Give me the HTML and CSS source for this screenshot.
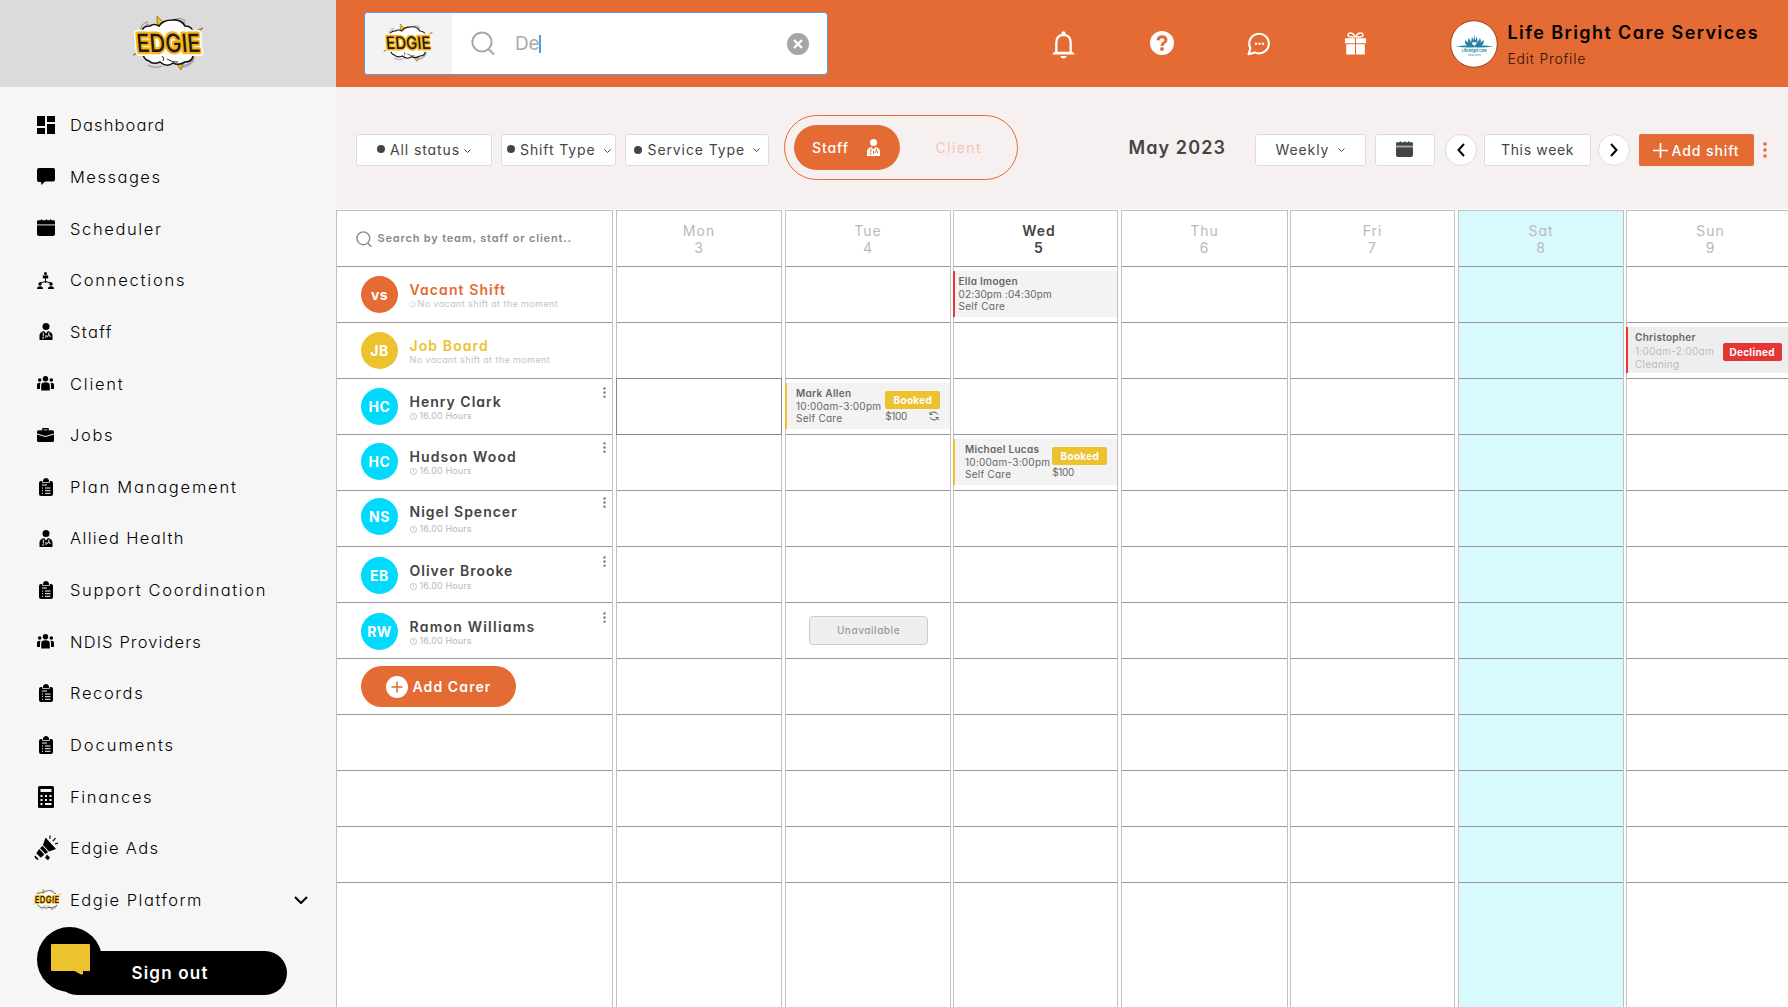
FILE: index.html
```html
<!DOCTYPE html>
<html lang="en">
<head>
<meta charset="utf-8">
<title>Edgie – Scheduler</title>
<link rel="stylesheet" href="styles.css">
</head>
<body>
<svg class="defs" aria-hidden="true">
  <symbol id="logo" viewBox="0 0 72 56">
    <g fill="none" stroke="#8d8d8d" stroke-width="1"><path d="M9 14q-1-6 7-8M12 13q0-4 5-5M43 3q6-2 11 2M45 5q5-1 8 2M50 49q8 1 13-8M48 51q9 1 14-7M16 49q6 4 14 1"/></g>
    <path d="M25 0l7 7-1 6-6-2zM71 12l-8 8-4-4zM1 39l12-8 3 5zM49 54l-5-7 2-5 6 2z" fill="#e9c01a" stroke="#4a3c05" stroke-width=".5"/>
    <path d="M10 16q0-6 8-6 4-3 9 0 4-6 13-6 9-1 13 6 8 0 9 9l-1 21q-1 6-8 6-6 4-12 1-6 5-13-1-7 3-11-1-6-2-6-8z" fill="#fff" stroke="#111" stroke-width="1.6"/>
    <path d="M30 40q3 2 1 5M35 43q6 4 11 3" fill="none" stroke="#222" stroke-width="1"/>
    <g font-family="Inter, sans-serif" font-weight="500" font-size="25" text-anchor="middle" transform="translate(-3 0) skewX(5)">
      <text x="37" y="36.500" textLength="64" lengthAdjust="spacingAndGlyphs" fill="#fff" stroke="#fff" stroke-width="8" stroke-linejoin="round">EDGIE</text>
      <text x="37" y="36.500" textLength="64" lengthAdjust="spacingAndGlyphs" fill="#f9b414" stroke="#f9b414" stroke-width="4.500" stroke-linejoin="round">EDGIE</text>
      <text x="37" y="36.500" textLength="64" lengthAdjust="spacingAndGlyphs" fill="#1b1b1b">EDGIE</text>
    </g>
  </symbol>
  <symbol id="dashboard" viewBox="0 0 18 18"><path d="M0 0h8v10H0zM10 0h8v6h-8zM0 12h8v6H0zM10 8h8v10h-8z"/></symbol>
  <symbol id="message" viewBox="0 0 18 17"><path d="M2 0h14.500q1.500 0 1.500 2v9.500q0 2-2 2H8L4.500 17l-.5-3H2q-2 0-2-2V2q0-2 2-2z"/></symbol>
  <symbol id="calendar" viewBox="0 0 18 17"><path d="M0 5V2.500Q0 1.200 1.500 1.200h2L4.500 0l1 1.200h3L9.500 0l1 1.200h2L13.500 0l1 1.200h2q1.500 0 1.500 1.300V5z"/><path d="M0 5h18v1.600H0z" opacity=".45"/><path d="M0 6.600h18V15q0 2-2 2H2q-2 0-2-2z"/></symbol>
  <symbol id="network" viewBox="0 0 17 17"><circle cx="8.500" cy="1.500" r="1.500"/><path d="M5.800 3.400h5.400v3H5.800z"/><path d="M8.500 6v5M3 12.500V11l5.500-1.500L14 11v1.500" fill="none" stroke="currentColor"/><circle cx="3" cy="12" r="1.700"/><circle cx="14" cy="12" r="1.700"/><path d="M0 17q0-2.800 3-2.800T6 17zM11 17q0-2.800 3-2.800t3 2.800z"/></symbol>
  <symbol id="person" viewBox="0 0 14 17"><circle cx="7" cy="3.500" r="3.500"/><path d="M.5 17v-4.500q0-3.500 4.500-4.500l2 2.500L9 8q4.500 1 4.500 4.500V17z"/><path d="M4.300 9.500v4M3 15h2M9.800 9.500v2.300M8.600 14q0-2 1.300-2t1.300 2M7 12v3" class="cut"/></symbol>
  <symbol id="people" viewBox="0 0 17 15"><circle cx="8.500" cy="2.700" r="2.700"/><circle cx="2.700" cy="4" r="1.800"/><circle cx="14.300" cy="4" r="1.800"/><path d="M4.200 14.500V9.500q0-3.200 4.300-3.200t4.300 3.200v5zM0 13V9q0-2.400 3.500-2.200Q3 8 3 9.500V13zM17 13V9q0-2.400-3.500-2.200Q14 8 14 9.500V13z"/></symbol>
  <symbol id="case" viewBox="0 0 17 14"><path d="M6 2.500V.8h5v1.700" fill="none" stroke="currentColor" stroke-width="1.500"/><path d="M1.500 2.300h14q1.500 0 1.500 1.500v1.700L8.500 8 0 5.500V3.800q0-1.500 1.500-1.500zM0 6.600L8.500 9 17 6.600v5.900q0 1.500-1.500 1.500h-14Q0 14 0 12.500z"/></symbol>
  <symbol id="clipboard" viewBox="0 0 14 18"><path d="M4 2.800Q4.500 0 7 0t3 2.800V4H4zM0 5q0-2 2-2h1.200v1.800h7.600V3H12q2 0 2 2v11q0 2-2 2H2q-2 0-2-2z"/><path d="M3 7h5M6 10h5.500M6 12.700h5.500M6 15.300h5.500M3 10h1M3 12.700h1M3 15.300h1" class="cut"/></symbol>
  <symbol id="calc" viewBox="0 0 16 22"><path d="M1.500 0h13Q16 0 16 1.500v19q0 1.500-1.500 1.500h-13Q0 22 0 20.500v-19Q0 0 1.500 0z"/><path d="M2.500 3h11v3h-11zM2.500 9h2v2h-2zM7 9h2v2H7zM11.500 9h2v2h-2zM2.500 13h2v2h-2zM7 13h2v2H7zM11.500 13h2v2h-2zM2.500 17h2v2h-2zM7 17h6.500v2H7z" fill="#f6f6f6"/></symbol>
  <symbol id="ads" viewBox="0 0 24 26"><path d="M11.500 2.500L22 14l-7 2.500-6-6.500zM8.500 10.800l5.600 6.200-2.600 2-5.500-5.700zM5.200 14l5.200 5.500-3.600 3.300-4.500-4.600zM13 19.500l3 3-2 2.700-3-2.500zM1.300 20.500l3.400 3.800-.7.600q-3.300-1-3.500-3.600z"/><path d="M16 .5v3.200M21.500 3.200l-2.600 3M21 9l3-1" fill="none" stroke="currentColor" stroke-width="1.200"/></symbol>
  <symbol id="search" viewBox="0 0 24 24"><circle cx="11" cy="11" r="9.600" fill="none" stroke="currentColor" stroke-width="2"/><path d="M17.500 18l5.500 5.500" stroke="currentColor" stroke-width="2.200"/></symbol>
  <symbol id="down" viewBox="0 0 14 8"><path d="M1 1l6 6 6-6" fill="none" stroke="currentColor" stroke-width="2"/></symbol>
  <symbol id="kebab" viewBox="0 0 4 16"><circle cx="2" cy="2" r="1.800"/><circle cx="2" cy="8" r="1.800"/><circle cx="2" cy="14" r="1.800"/></symbol>
  <symbol id="clock" viewBox="0 0 8 8"><circle cx="4" cy="4" r="3.500" fill="none" stroke="currentColor" stroke-width=".9"/><path d="M4 1.800V4l1.500 1" fill="none" stroke="currentColor" stroke-width=".9"/></symbol>
  <symbol id="smile" viewBox="0 0 8 8"><circle cx="4" cy="4" r="3.500" fill="none" stroke="currentColor" stroke-width=".6"/><path d="M2.300 4.700q1.700 2 3.400 0M2.800 2.500v.8M5.200 2.500v.8" fill="none" stroke="currentColor" stroke-width=".6"/></symbol>
</svg>

<div class="app">
  <aside class="sidebar">
    <div class="brand"><svg><use href="#logo"/></svg></div>
    <nav class="nav">
      <a><i><svg width="18" height="18"><use href="#dashboard"/></svg></i><span>Dashboard</span></a>
      <a><i><svg width="18" height="17"><use href="#message"/></svg></i><span>Messages</span></a>
      <a><i><svg class="up" width="18" height="17"><use href="#calendar"/></svg></i><span>Scheduler</span></a>
      <a><i><svg width="17" height="17"><use href="#network"/></svg></i><span>Connections</span></a>
      <a><i><svg width="14" height="17"><use href="#person"/></svg></i><span>Staff</span></a>
      <a><i><svg width="17" height="15"><use href="#people"/></svg></i><span>Client</span></a>
      <a><i><svg width="17" height="14"><use href="#case"/></svg></i><span>Jobs</span></a>
      <a><i><svg width="14" height="18"><use href="#clipboard"/></svg></i><span>Plan Management</span></a>
      <a><i><svg width="14" height="17"><use href="#person"/></svg></i><span>Allied Health</span></a>
      <a><i><svg width="14" height="18"><use href="#clipboard"/></svg></i><span>Support Coordination</span></a>
      <a><i><svg width="17" height="15"><use href="#people"/></svg></i><span>NDIS Providers</span></a>
      <a><i><svg width="14" height="18"><use href="#clipboard"/></svg></i><span>Records</span></a>
      <a><i><svg width="14" height="18"><use href="#clipboard"/></svg></i><span>Documents</span></a>
      <a><i><svg width="16" height="22"><use href="#calc"/></svg></i><span>Finances</span></a>
      <a><i><svg width="24" height="26"><use href="#ads"/></svg></i><span>Edgie Ads</span></a>
      <a><i class="wide"><svg width="28" height="22"><use href="#logo"/></svg></i><span>Edgie Platform</span><svg class="more" width="14" height="8"><use href="#down"/></svg></a>
    </nav>
    <button class="signout">Sign out</button>
    <button class="chat"><svg width="39" height="31" viewBox="0 0 39 31"><path d="M1 0h37q1 0 1 1v26h-7v3l-1.500.8L23.500 27H1q-1 0-1-1V1q0-1 1-1z" fill="#ecc22e"/></svg></button>
  </aside>

  <main class="main">
    <header class="topbar">
      <div class="search">
        <div class="search-logo"><svg><use href="#logo"/></svg></div>
        <svg class="glass"><use href="#search"/></svg>
        <span class="query">De</span>
        <span class="clear"><svg width="10" height="10" viewBox="0 0 10 10"><path d="M1 1l8 8M9 1L1 9" stroke="#fff" stroke-width="2.400"/></svg></span>
      </div>
      <div class="actions">
        <svg width="23" height="28" viewBox="0 0 23 28"><path d="M4.300 22V12q0-8 7.200-8.200Q18.700 4 18.700 12v10" fill="none" stroke="#fff" stroke-width="2.300"/><circle cx="11.500" cy="2.200" r="2"/><path d="M0 23.500L2.500 20.700h18L23 23.500zM8.300 25h6.400q-1 2.600-3.200 2.600T8.300 25z"/></svg>
        <svg width="24" height="24" viewBox="0 0 24 24"><circle cx="12" cy="12" r="12"/><path d="M8 9.300q.3-3.600 4-3.600 4 0 4 3.200 0 1.900-2.200 3.100-1.800 1-1.800 3" fill="none" stroke="#e46b33" stroke-width="2.900"/><circle cx="12" cy="18" r="1.900" fill="#e46b33"/></svg>
        <svg width="24" height="24" viewBox="0 0 24 24"><path d="M3.400 16.200a9.800 9.800 0 1 1 4.400 4.200L1.500 22.200z" fill="none" stroke="#fff" stroke-width="2.100" stroke-linejoin="round"/><circle cx="9" cy="11.700" r="1.200"/><circle cx="12.500" cy="11.700" r="1.200"/><circle cx="16" cy="11.700" r="1.200"/></svg>
        <svg width="21" height="23" viewBox="0 0 21 23"><path d="M0 6.300h10v5H0zM11 6.300h10v5H11zM1.200 12.300H10V22.500H1.200zM11 12.300h8.800v10.200H11z"/><path d="M10 4.800Q3.500 5.500 3 3.300 3 .9 5.800 1 9 1.500 10 4.800zM11 4.800q6.500.7 7-1.500 0-2.400-2.800-2.300-3.200.5-4.200 3.800z" fill="none" stroke="#fff" stroke-width="1.500"/></svg>
      </div>
      <div class="profile">
        <svg class="avatar-logo" viewBox="0 0 48 48"><circle cx="24" cy="24" r="23.300" fill="#fff" stroke="#a33c17" stroke-width="1"/><g fill="#2584a6"><path d="M5 26.500q10-1.500 12-1-2.500-2-2-5.500l3 2.500q-.5-3 1-4.500l2 4.500 1-6 1.700 4 .6-6.500.8 6.500 1.800-4 .8 6 2.200-4.500q1.400 1.500.8 4.500l3-2.500q.5 3.500-2 5.500 3-.5 12 1-12 1.500-18.700.7Q17 28 5 26.500z"/><path d="M24.300 26l-2.200-2.200q-.4-1.700 1-1.700 1 0 1.200.8.200-.8 1.300-.8 1.300.1.900 1.700z" fill="#fff"/><text x="24.300" y="32" font-size="4" font-weight="700" text-anchor="middle" textLength="25" lengthAdjust="spacingAndGlyphs" letter-spacing="0">Life Bright Care</text><text x="24.300" y="35.500" font-size="2.600" text-anchor="middle" textLength="13" lengthAdjust="spacingAndGlyphs">SERVICES</text></g></svg>
        <div><strong>Life Bright Care Services</strong><small>Edit Profile</small></div>
      </div>
    </header>

    <section class="toolbar">
      <div class="pill status"><b></b><span>All status</span><svg><use href="#down"/></svg></div>
      <div class="pill shift"><b></b><span>Shift Type</span><svg><use href="#down"/></svg></div>
      <div class="pill service"><b></b><span>Service Type</span><svg><use href="#down"/></svg></div>
      <div class="toggle"><div class="on"><span>Staff</span><svg width="15" height="17"><use href="#person"/></svg></div><div class="off">Client</div></div>
      <h1>May 2023</h1>
      <div class="pill weekly"><span>Weekly</span><svg><use href="#down"/></svg></div>
      <div class="pill pick"><svg><use href="#calendar"/></svg></div>
      <div class="round prev"><svg width="8" height="14" viewBox="0 0 8 14"><path d="M7 1L1.500 7 7 13" fill="none" stroke="#000" stroke-width="2"/></svg></div>
      <div class="pill week"><span>This week</span></div>
      <div class="round next"><svg width="8" height="14" viewBox="0 0 8 14"><path d="M1 1l5.500 6L1 13" fill="none" stroke="#000" stroke-width="2"/></svg></div>
      <div class="add"><svg width="15" height="15" viewBox="0 0 15 15"><path d="M7.500 0v15M0 7.500h15" stroke="#fff" stroke-width="1.700"/></svg><span>Add shift</span></div>
      <svg class="menu"><use href="#kebab"/></svg>
    </section>

    <section class="board">
      <div class="col people">
        <div class="head find"><svg><use href="#search"/></svg><span>Search by team, staff or client..</span></div>
        <div class="cell vs"><span class="av orange">vs</span><div><h2>Vacant Shift</h2><p class="smile"><svg><use href="#smile"/></svg>No vacant shift at the moment</p></div></div>
        <div class="cell jb"><span class="av yellow">JB</span><div><h2>Job Board</h2><p>No vacant shift at the moment</p></div></div>
        <div class="cell"><span class="av">HC</span><div><h2>Henry Clark</h2><p class="h"><svg><use href="#clock"/></svg>16.00 Hours</p></div><svg class="dots"><use href="#kebab"/></svg></div>
        <div class="cell r2"><span class="av">HC</span><div><h2>Hudson Wood</h2><p class="h"><svg><use href="#clock"/></svg>16.00 Hours</p></div><svg class="dots"><use href="#kebab"/></svg></div>
        <div class="cell r3"><span class="av">NS</span><div><h2>Nigel Spencer</h2><p class="h"><svg><use href="#clock"/></svg>16.00 Hours</p></div><svg class="dots"><use href="#kebab"/></svg></div>
        <div class="cell r4"><span class="av">EB</span><div><h2>Oliver Brooke</h2><p class="h"><svg><use href="#clock"/></svg>16.00 Hours</p></div><svg class="dots"><use href="#kebab"/></svg></div>
        <div class="cell r5"><span class="av">RW</span><div><h2>Ramon Williams</h2><p class="h"><svg><use href="#clock"/></svg>16.00 Hours</p></div><svg class="dots"><use href="#kebab"/></svg></div>
        <div class="cell carer"><button><svg width="22" height="22" viewBox="0 0 22 22"><circle cx="11" cy="11" r="11" fill="#fff"/><path d="M11 5.500v11M5.500 11h11" stroke="#e46b33" stroke-width="1.500"/></svg>Add Carer</button></div>
        <div class="cell"></div><div class="cell"></div><div class="cell"></div>
      </div>
      <div class="col">
        <div class="head">Mon<br>3</div>
        <div class="cell"></div><div class="cell"></div><div class="cell focus"></div><div class="cell"></div><div class="cell"></div><div class="cell"></div><div class="cell"></div><div class="cell"></div><div class="cell"></div><div class="cell"></div><div class="cell"></div>
      </div>
      <div class="col">
        <div class="head">Tue<br>4</div>
        <div class="cell"></div><div class="cell"></div>
        <div class="cell"><div class="event booked"><div class="info"><b>Mark Allen</b><span>10:00am-3:00pm</span><span>Self Care</span></div><div class="side"><em>Booked</em><div class="pay"><span>$100</span><svg width="10" height="10" viewBox="0 0 10 10"><path d="M8.800 3.500Q7.500 1 5 1 3 1 1.800 2.500M1.200 6.500Q2.500 9 5 9q2 0 3.200-1.500M1 1v2.500h2.500M9 9V6.500H6.500" fill="none" stroke="#555" stroke-width="1"/></svg></div></div></div></div>
        <div class="cell"></div><div class="cell"></div><div class="cell"></div>
        <div class="cell center"><div class="unavailable">Unavailable</div></div>
        <div class="cell"></div><div class="cell"></div><div class="cell"></div><div class="cell"></div>
      </div>
      <div class="col">
        <div class="head today">Wed<br>5</div>
        <div class="cell"><div class="event open"><div class="info"><b>Ella Imogen</b><span>02:30pm :04:30pm</span><span>Self Care</span></div></div></div>
        <div class="cell"></div><div class="cell"></div>
        <div class="cell"><div class="event booked wed"><div class="info"><b>Michael Lucas</b><span>10:00am-3:00pm</span><span>Self Care</span></div><div class="side"><em>Booked</em><div class="pay"><span>$100</span></div></div></div></div>
        <div class="cell"></div><div class="cell"></div><div class="cell"></div><div class="cell"></div><div class="cell"></div><div class="cell"></div><div class="cell"></div>
      </div>
      <div class="col">
        <div class="head">Thu<br>6</div>
        <div class="cell"></div><div class="cell"></div><div class="cell"></div><div class="cell"></div><div class="cell"></div><div class="cell"></div><div class="cell"></div><div class="cell"></div><div class="cell"></div><div class="cell"></div><div class="cell"></div>
      </div>
      <div class="col">
        <div class="head">Fri<br>7</div>
        <div class="cell"></div><div class="cell"></div><div class="cell"></div><div class="cell"></div><div class="cell"></div><div class="cell"></div><div class="cell"></div><div class="cell"></div><div class="cell"></div><div class="cell"></div><div class="cell"></div>
      </div>
      <div class="col weekend">
        <div class="head">Sat<br>8</div>
        <div class="cell"></div><div class="cell"></div><div class="cell"></div><div class="cell"></div><div class="cell"></div><div class="cell"></div><div class="cell"></div><div class="cell"></div><div class="cell"></div><div class="cell"></div><div class="cell"></div>
      </div>
      <div class="col last">
        <div class="head">Sun<br>9</div>
        <div class="cell"></div>
        <div class="cell"><div class="event declined"><div class="info"><b>Christopher</b><span>1:00am-2:00am</span><span>Cleaning</span></div><div class="side"><em>Declined</em></div></div></div>
        <div class="cell"></div><div class="cell"></div><div class="cell"></div><div class="cell"></div><div class="cell"></div><div class="cell"></div><div class="cell"></div><div class="cell"></div><div class="cell"></div>
      </div>
    </section>
  </main>
</div>
</body>
</html>
```
FILE: styles.css
```css
* { box-sizing: border-box; margin: 0; padding: 0; }
body {
  width: 1788px; height: 1007px; overflow: hidden; background: #fff; color: #000;
  font-family: Inter, "Open Sans", sans-serif;
  font-feature-settings: "cv11", "ss03";
}
button { border: 0; font: inherit; font-feature-settings: inherit; }
svg { display: block; flex: none; fill: currentColor; overflow: visible; }
.defs { position: absolute; width: 0; height: 0; }
.cut { fill: none; stroke: var(--cut, #f6f6f6); stroke-width: 1; }
.app { display: grid; grid-template-columns: 336px 1fr; height: 1007px; }

/* Sidebar */
.sidebar { position: relative; background: #f6f6f6; }
.brand { height: 87px; background: #dbdbdb; display: flex; justify-content: center; align-items: center; }
.brand svg { width: 72px; height: 56px; }
.nav { padding-top: 12.500px; }
.nav a { display: flex; align-items: center; height: 51.65px; font-size: 16.500px; font-weight: 300; letter-spacing: 1.63px; white-space: nowrap; }
.nav i { display: flex; width: 48px; margin: 0 .5px 0 21.500px; justify-content: center; }
.nav i.wide { margin-left: 22.500px; margin-right: -.5px; }
.nav i .up { margin-top: -3px; }
.nav .more { margin-left: auto; margin-right: 28.500px; }
.nav a:nth-child(1), .nav a:nth-child(11) { letter-spacing: 1.12px; }
.nav a:nth-child(9), .nav a:nth-child(5), .nav a:nth-child(15) { letter-spacing: 1.35px; }
.nav a:nth-child(2), .nav a:nth-child(16) { letter-spacing: 1.5px; }
.nav a:nth-child(4), .nav a:nth-child(6), .nav a:nth-child(8) { letter-spacing: 1.77px; }
.nav a:nth-child(13) { letter-spacing: 1.95px; }
.signout { display: block; width: 232px; height: 44px; margin: 25.100px 0 0 55px; padding-right: 2px; border-radius: 22px; background: #000; color: #fff; font-size: 17px; font-weight: 600; letter-spacing: 1.2px; }
.chat { position: absolute; left: 37px; top: 927px; width: 65px; height: 65px; border-radius: 50%; background: #000; display: flex; justify-content: center; padding: 17px 0 0 1px; }

/* Top bar */
.topbar { display: flex; height: 87px; background: #e46b33; }
.search { display: flex; align-items: center; width: 464px; height: 63px; margin: 12px 0 0 28px; border: 1px solid #5b9ce6; border-radius: 4px; background: #fff; overflow: hidden; }
.search-logo { width: 87px; height: 61px; background: #f3f3f3; display: flex; align-items: center; justify-content: center; }
.search-logo svg { width: 50px; height: 39px; margin-left: -2px; }
.glass { width: 24px; height: 24px; margin: -2px 0 0 19px; color: #a9a9a9; }
.query { margin-left: 20px; font-size: 19px; font-weight: 400; line-height: 18px; letter-spacing: -.3px; color: #aaa; border-right: 2px solid #4d9bf0; }
.clear { width: 22px; height: 22px; margin: 0 18.500px 0 auto; border-radius: 50%; background: #a6a6a6; display: flex; align-items: center; justify-content: center; }
.actions { display: flex; align-items: center; color: #fff; margin-left: 224px; height: 87px; }
.actions svg:nth-child(1) { margin-top: 2px; }
.actions svg:nth-child(2) { margin: -1px 0 0 75px; }
.actions svg:nth-child(3) { margin-left: 73px; }
.actions svg:nth-child(4) { margin: -1px 0 0 74px; }
.profile { display: flex; margin-left: 84px; }
.avatar-logo { width: 48px; height: 48px; margin-top: 20px; }
.profile div { margin: 21px 0 0 9.500px; white-space: nowrap; }
.profile strong, .profile small { display: block; }
.profile strong { font-size: 18px; line-height: 23px; font-weight: 600; letter-spacing: 1.41px; }
.profile small { font-size: 14px; line-height: 18px; margin-top: 6px; font-weight: 300; letter-spacing: .75px; color: #2b1309; }

/* Toolbar */
.toolbar { display: flex; height: 123px; background: #f7f0f0; border-bottom: 1px solid #fff; color: #444; font-size: 14px; letter-spacing: .9px; white-space: nowrap; }
.pill { display: flex; align-items: center; height: 32px; margin-top: 47px; padding-bottom: 1px; background: #fff; border: 1px solid #dcdcdc; border-radius: 3px; }
.pill b { width: 8px; height: 8px; border-radius: 50%; background: #444; }
.pill svg { width: 7px; height: 4px; }
.status { width: 136px; margin-left: 20px; padding-left: 20px; padding-bottom: 2px; }
.status span { margin: 0 4px 0 5px; } .status svg { margin-top: 3px; }
.shift { width: 115px; margin-left: 8.500px; padding-left: 5px; }
.shift b { margin-top: -2px; } .shift span { margin: 0 8px 0 5.500px; } .shift svg { margin-top: 3px; }
.service { width: 144px; margin-left: 9px; padding-left: 8px; }
.service span { margin: 0 8px 0 6px; }
.toggle { display: flex; width: 234px; height: 65px; margin: 28px 0 0 15px; border: 1px solid #e46b33; border-radius: 33px; padding: 9px 0 0 9px; }
.on { --cut: #e46b33; width: 106px; height: 45px; border-radius: 23px; background: #e46b33; color: #fff; font-weight: 500; display: flex; align-items: center; padding-left: 18.500px; gap: 17px; }
.off { line-height: 45px; margin-left: 36px; color: #f3c6b2; letter-spacing: 1.4px; }
.toolbar h1 { margin: 49px 0 0 111px; width: 126px; font-size: 18px; line-height: 23px; font-weight: 600; letter-spacing: 1.1px; }
.weekly { width: 111px; padding-left: 20px; }
.weekly span { margin-right: 9px; }
.pick { width: 60px; margin-left: 9px; justify-content: center; }
.pick svg { width: 17px; height: 16px; margin-top: -1px; }
.round { width: 32px; height: 32px; margin-top: 47px; border-radius: 50%; background: #fff; border: 1px solid #dcdcdc; display: flex; align-items: center; justify-content: center; }
.prev { margin-left: 10px; }
.week { width: 107px; margin-left: 7px; padding-left: 16.500px; letter-spacing: .65px; }
.next { margin-left: 7px; }
.add { display: flex; align-items: center; width: 115px; height: 32px; margin: 47px 0 0 9px; padding-left: 14px; gap: 4px; border-radius: 2px; background: #e46b33; color: #fff; font-weight: 500; }
.menu { width: 4px; height: 16px; margin: 55px 0 0 9px; color: #e46b33; }

/* Calendar board */
.board { display: grid; grid-template-columns: 280px 169px 168px 168px 169px 168px 168px 162px; height: 797px; }
.col { display: flex; flex-direction: column; margin-right: 3px; border: solid #c0c0c0; border-width: 1px 1px 0; min-width: 0; }
.col:nth-child(3), .col:nth-child(5), .col:nth-child(7) { margin-right: 2px; }
.last { margin-right: 0; border-right: 0; }
.weekend { background: #d8f9fe; }
.head { height: 56px; padding-top: 11px; border-bottom: 1px solid #999; font-size: 14px; line-height: 17px; letter-spacing: 1px; text-align: center; color: #b9b9b9; }
.weekend .head { color: #b3bcbd; }
.head.today { color: #444; font-weight: 600; padding-left: 7px; }
.last .head { padding-left: 6px; }
.cell { flex: none; height: 56px; border-bottom: 1px solid #999; }
.cell.focus { box-shadow: 0 0 0 1px #888; height: 55px; margin-bottom: 1px; border: 0; }
.people .find { display: flex; align-items: center; padding: 0 0 0 18.500px; color: #888; font-size: 11px; font-weight: 600; letter-spacing: .82px; white-space: nowrap; }
.find svg { width: 16px; height: 16px; margin-right: 6px; }
.people .cell { display: flex; padding: 9px 6px 0 24px; }
.people .cell.r2 { padding-top: 8px; }
.people .cell.r3 { padding-top: 7px; }
.people .cell.r4, .people .cell.r5 { padding-top: 10px; }
.av { width: 37px; height: 37px; border-radius: 50%; background: #00dafd; color: #fff; font-size: 14px; font-weight: 700; line-height: 37px; text-align: center; letter-spacing: .5px; }
.av.orange { background: #e46b33; } .av.yellow { background: #ecc22e; }
.people .cell > div { margin-left: 11.500px; padding-top: 5px; white-space: nowrap; }
h2 { font-size: 14px; line-height: 18px; font-weight: 600; letter-spacing: 1px; color: #444; }
.vs h2 { color: #e46b33; letter-spacing: 1.1px; } .jb h2 { color: #ecc22e; letter-spacing: 1.1px; }
.r5 h2 { letter-spacing: 1.22px; } .r2 h2 { letter-spacing: 1.08px; }
.people p { display: flex; align-items: center; gap: 2px; margin-top: 0; font-size: 9px; line-height: 10px; letter-spacing: .4px; color: #c3c3c3; }
.people p.h { letter-spacing: .13px; gap: 3px; color: #b8b8b8; }
.people p.smile { margin-left: -.5px; gap: 1.500px; }
.people p svg { width: 7px; height: 7px; }
.people .r3 p { margin-top: 3px; } .people .r4 p { margin-top: 1px; }
.people .dots { width: 3px; height: 11px; margin: -1px .5px 0 auto; color: #777; }
.people .cell.carer { padding-top: 7px; }
.carer button { display: flex; align-items: center; width: 155px; height: 41px; padding-left: 24.500px; gap: 5px; border-radius: 21px; background: #e46b33; color: #fff; font-size: 14px; font-weight: 600; letter-spacing: 1.1px; white-space: nowrap; }

.event { display: flex; height: 46px; margin-top: 4px; background: #f3f3f3; font-size: 10px; letter-spacing: .3px; color: #666; white-space: nowrap; }
.event .info { display: flex; flex-direction: column; padding-top: 4px; line-height: 12.700px; }
.event b { font-weight: 600; }
.open { box-shadow: inset 1px 0 #e63535, -1px 0 #e63535; padding-left: 4.500px; }
.open span:nth-child(2) { letter-spacing: .12px; }
.booked { box-shadow: inset 1px 0 #ecc22e, -1px 0 #ecc22e; padding-left: 10px; }
.wed { padding-left: 11px; }
.booked .info span { letter-spacing: .25px; }
.side { margin-left: 4px; padding-top: 7.500px; }
.wed .side { margin-left: 2px; }
.side em { display: block; width: 55px; height: 18px; line-height: 18px; border-radius: 2px; background: #ecc22e; color: #fff; font-style: normal; font-weight: 700; text-align: center; }
.pay { display: flex; justify-content: space-between; padding-right: 1px; line-height: 15px; letter-spacing: -.4px; }
.pay svg { margin-top: 2px; }
.declined { background: #eee; box-shadow: inset 1px 0 #e63535, -1px 0 #e63535; padding-left: 8px; }
.declined .info span { color: #bbb; }
.declined .info span:nth-child(2) { margin-top: 1.500px; }
.declined .side { margin-left: 8.500px; padding-top: 15.500px; }
.declined em { width: 59px; background: #e63535; }
.center { display: flex; justify-content: center; padding-top: 13px; }
.unavailable { width: 119px; height: 29px; margin-left: 1px; line-height: 27px; border: 1px solid #ccc; border-radius: 4px; background: #efefef; color: #999; font-size: 10px; font-weight: 500; letter-spacing: .55px; text-align: center; }
```
